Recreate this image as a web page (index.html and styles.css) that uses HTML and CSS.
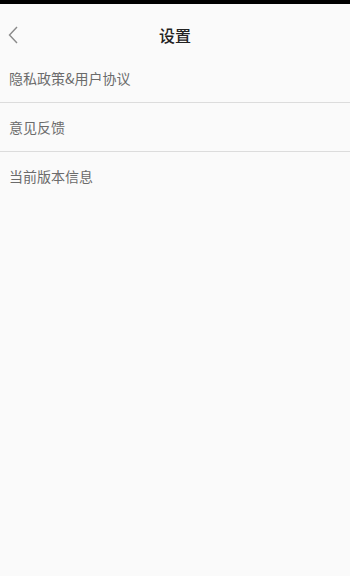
FILE: index.html
```html
<!DOCTYPE html>
<html lang="zh">
<head>
<meta charset="utf-8">
<title>设置</title>
<link rel="stylesheet" href="styles.css">
</head>
<body>
<div class="statusbar"></div>
<header class="header">
  <span class="back">
    <svg width="10" height="18" viewBox="0 0 10 18"><path d="M9 1 L1.5 9 L9 17" fill="none" stroke="#8a8a8a" stroke-width="1.4"/></svg>
  </span>
  <h1 class="title">设置</h1>
</header>
<ul class="list">
  <li class="item">隐私政策&amp;用户协议</li>
  <li class="item">意见反馈</li>
  <li class="item last">当前版本信息</li>
</ul>
</body>
</html>
```
FILE: styles.css
```css
html, body {
  margin: 0;
  padding: 0;
  background: #fafafa;
  height: 100%;
}
body {
  font-family: "Noto Sans CJK SC", "Noto Sans", sans-serif;
}
.statusbar {
  height: 4px;
  background: #000;
}
.header {
  position: relative;
  height: 50px;
  display: flex;
  justify-content: center;
}
.back {
  position: absolute;
  left: 8px;
  top: 22px;
  display: flex;
}
.title {
  margin: 0;
  padding-top: 21px;
  font-size: 16px;
  line-height: 20px;
  font-weight: 500;
  color: #222;
}
.list {
  list-style: none;
  margin: 0;
  padding: 0;
}
.item {
  height: 48px;
  line-height: 48px;
  padding-left: 9px;
  font-size: 14px;
  color: #6b6b6b;
  border-bottom: 1px solid #dcdcdc;
}
.item.last {
  border-bottom: none;
}
```
